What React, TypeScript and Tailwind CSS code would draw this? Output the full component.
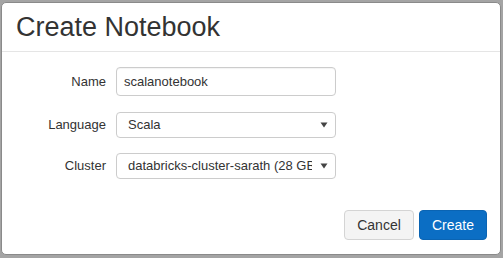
import React from "react";

function Arrow() {
  return (
    <svg width="8" height="6" viewBox="0 0 8 6" className="shrink-0">
      <path d="M0.5 0.5 L7.5 0.5 L4 5.5 Z" fill="#444" />
    </svg>
  );
}

export default function App() {
  return (
    <div
      className="w-[503px] h-[258px] bg-[#a4a4a4] pt-[2px] pl-[1px] pr-[2px] pb-[3px] flex"
      style={{ fontFamily: '"Liberation Sans", Arial, sans-serif' }}
    >
      <div className="flex-1 flex flex-col bg-white border border-[#8a8a8a] rounded-[5px] text-[#333]">
        <div className="h-[49px] border-b border-[#e5e5e5] flex items-center pl-[14px] pt-[1px]">
          <h1 className="text-[27px] leading-none text-[#333]">Create Notebook</h1>
        </div>
        <div className="flex flex-col pt-[15px] gap-[15px] text-[13px]">
          <div className="flex items-center">
            <label className="w-[114px] text-right pr-[10px]">Name</label>
            <div className="w-[220px] h-[29px] border border-[#ccc] rounded-[4px] flex items-center px-[7px] shadow-[inset_0_1px_1px_rgba(0,0,0,0.05)]">
              scalanotebook
            </div>
          </div>
          <div className="flex items-center mt-[1px]">
            <label className="w-[114px] text-right pr-[10px]">Language</label>
            <div className="w-[220px] h-[26px] border border-[#ccc] rounded-[4px] flex items-center pl-[11px] pr-[7px] gap-2">
              <span className="flex-1 whitespace-nowrap overflow-hidden">Scala</span>
              <Arrow />
            </div>
          </div>
          <div className="flex items-center">
            <label className="w-[114px] text-right pr-[10px]">Cluster</label>
            <div className="w-[220px] h-[26px] border border-[#ccc] rounded-[4px] flex items-center pl-[11px] pr-[7px] gap-[8px]">
              <span className="flex-1 whitespace-nowrap overflow-hidden">databricks-cluster-sarath (28 GB Memory, 4 Cores)</span>
              <Arrow />
            </div>
          </div>
        </div>
        <div className="flex-1 flex items-end justify-end pr-[13px] pb-[14px] gap-[5px] text-[14px]">
          <button className="w-[70px] h-[30px] bg-[#f4f4f4] border border-[#d4d4d4] rounded-[4px] text-[#333]">
            Cancel
          </button>
          <button className="w-[68px] h-[30px] bg-[#0b6ec4] border border-[#0a64b3] rounded-[4px] text-white">
            Create
          </button>
        </div>
      </div>
    </div>
  );
}
